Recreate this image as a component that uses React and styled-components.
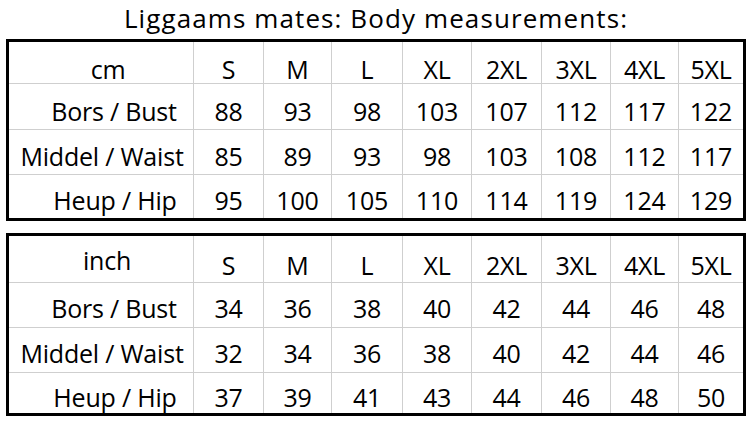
import React from "react";
import styled, { createGlobalStyle } from "styled-components";

const Global = createGlobalStyle`
  html, body { margin: 0; padding: 0; background: #ffffff; }
  body { font-family: "Open Sans", "Noto Sans", sans-serif; color: #000; }
`;

const Page = styled.div`
  width: 755px;
  height: 423px;
  display: flex;
  flex-direction: column;
  padding: 0 9px 0 6px;
  box-sizing: border-box;
`;

const Title = styled.h1`
  margin: 0 0 3px 0;
  font-weight: 400;
  font-size: 26px;
  line-height: 36px;
  letter-spacing: 1.1px;
  text-align: center;
  white-space: nowrap;
`;

const Table = styled.div`
  width: 740px;
  box-sizing: border-box;
  border: 3px solid #000;
  display: grid;
  grid-template-columns: 185px 70px 68px 71px 69px 70px 69px 68px 1fr;
  grid-template-rows: ${(p) => p.$rows};
  margin-bottom: ${(p) => p.$gap || 0}px;
`;

const Cell = styled.div`
  box-sizing: border-box;
  border-right: ${(p) => (p.$lastCol ? "none" : "1px solid #cfcfcf")};
  border-bottom: ${(p) => (p.$lastRow ? "none" : "1px solid #cfcfcf")};
  font-size: 25px;
  line-height: 34px;
  text-align: center;
  padding-top: ${(p) => p.$pad}px;
  padding-left: ${(p) => p.$shift || 0}px;
  white-space: nowrap;
  letter-spacing: -0.2px;
`;

const sizes = ["S", "M", "L", "XL", "2XL", "3XL", "4XL", "5XL"];

const tables = [
  {
    unit: "cm",
    unitShift: 14,
    unitPad: 10,
    rows: "42px 46px 45px 43px",
    pads: [10, 10, 9, 8],
    gap: 12,
    data: [
      { label: "Bors / Bust", shift: 26, values: [88, 93, 98, 103, 107, 112, 117, 122] },
      { label: "Middel / Waist", shift: 2, values: [85, 89, 93, 98, 103, 108, 112, 117] },
      { label: "Heup / Hip", shift: 28, values: [95, 100, 105, 110, 114, 119, 124, 129] },
    ],
  },
  {
    unit: "inch",
    unitShift: 12,
    unitPad: 7,
    rows: "47px 45px 45px 40px",
    pads: [12, 8, 8, 7],
    gap: 0,
    data: [
      { label: "Bors / Bust", shift: 26, values: [34, 36, 38, 40, 42, 44, 46, 48] },
      { label: "Middel / Waist", shift: 2, values: [32, 34, 36, 38, 40, 42, 44, 46] },
      { label: "Heup / Hip", shift: 28, values: [37, 39, 41, 43, 44, 46, 48, 50] },
    ],
  },
];

function SizeTable({ t }) {
  const rowCount = t.data.length + 1;
  return (
    <Table $rows={t.rows} $gap={t.gap}>
      <Cell $pad={t.unitPad} $shift={t.unitShift}>{t.unit}</Cell>
      {sizes.map((s, i) => (
        <Cell key={s} $pad={t.pads[0]} $lastCol={i === sizes.length - 1}>
          {s}
        </Cell>
      ))}
      {t.data.map((row, r) => {
        const lastRow = r + 2 === rowCount;
        return (
          <React.Fragment key={row.label}>
            <Cell $pad={t.pads[r + 1]} $shift={row.shift} $lastRow={lastRow}>
              {row.label}
            </Cell>
            {row.values.map((v, i) => (
              <Cell
                key={i}
                $pad={t.pads[r + 1]}
                $lastRow={lastRow}
                $lastCol={i === row.values.length - 1}
              >
                {v}
              </Cell>
            ))}
          </React.Fragment>
        );
      })}
    </Table>
  );
}

export default function App() {
  return (
    <>
      <Global />
      <Page>
        <Title>Liggaams mates: Body measurements:</Title>
        {tables.map((t) => (
          <SizeTable key={t.unit} t={t} />
        ))}
      </Page>
    </>
  );
}
